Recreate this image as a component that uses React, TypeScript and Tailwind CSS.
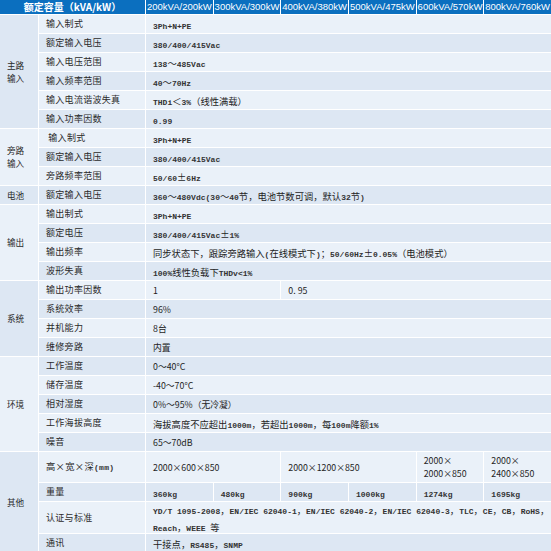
import type { ReactNode } from "react";

type Cell = { t: string; span: number; sans?: boolean };
type Row = { label: string; cells: Cell[]; sans?: boolean };
type Group = { name: string[]; rows: Row[] };

const HEAD = ["200kVA/200kW", "300kVA/300kW", "400kVA/380kW", "500kVA/475kW", "600kVA/570kW", "800kVA/760kW"];

const one = (t: string, sans = false): Cell[] => [{ t, span: 6, sans }];

const GROUPS: Group[] = [
  {
    name: ["主路", "输入"],
    rows: [
      { label: "输入制式", cells: one("3Ph+N+PE") },
      { label: "额定输入电压", cells: one("380/400/415Vac") },
      { label: "输入电压范围", cells: one("138～485Vac") },
      { label: "输入频率范围", cells: one("40～70Hz") },
      { label: "输入电流谐波失真", cells: one("THDi＜3%（线性满载）") },
      { label: "输入功率因数", cells: one("0.99") },
    ],
  },
  {
    name: ["旁路", "输入"],
    rows: [
      { label: "\u00a0输入制式", cells: one("3Ph+N+PE") },
      { label: "额定输入电压", cells: one("380/400/415Vac") },
      { label: "旁路频率范围", cells: one("50/60±6Hz") },
    ],
  },
  {
    name: ["电池"],
    rows: [{ label: "额定输入电压", cells: one("360～480Vdc(30～40节，电池节数可调，默认32节)") }],
  },
  {
    name: ["输出"],
    rows: [
      { label: "输出制式", cells: one("3Ph+N+PE") },
      { label: "额定电压", cells: one("380/400/415Vac±1%") },
      { label: "输出频率", cells: one("同步状态下，跟踪旁路输入(在线模式下)；50/60Hz±0.05%（电池模式）") },
      { label: "波形失真", cells: one("100%线性负载下THDv<1%") },
    ],
  },
  {
    name: ["系统"],
    rows: [
      { label: "输出功率因数", cells: [{ t: "1", span: 2, sans: true }, { t: "0. 95", span: 4, sans: true }] },
      { label: "系统效率", cells: one("96%", true) },
      { label: "并机能力", cells: one("8台", true) },
      { label: "维修旁路", cells: one("内置", true) },
    ],
  },
  {
    name: ["环境"],
    rows: [
      { label: "工作温度", cells: one("0～40°C", true) },
      { label: "储存温度", cells: one("-40～70°C", true) },
      { label: "相对湿度", cells: one("0%～95%（无冷凝）", true) },
      { label: "工作海拔高度", cells: one("海拔高度不应超出1000m，若超出1000m，每100m降额1%") },
      { label: "噪音", cells: one("65～70dB", true) },
    ],
  },
  {
    name: ["其他"],
    rows: [
      {
        label: "高×宽×深(mm)",
        cells: [
          { t: "2000×600×850", span: 2, sans: true },
          { t: "2000×1200×850", span: 2, sans: true },
          { t: "2000×\n2000×850", span: 1, sans: true },
          { t: "2000×\n2400×850", span: 1, sans: true },
        ],
      },
      {
        label: "重量",
        cells: ["360kg", "480kg", "900kg", "1000kg", "1274kg", "1695kg"].map((t) => ({ t, span: 1 })),
      },
      {
        label: "认证与标准",
        cells: one("YD/T 1095-2008，EN/IEC 62040-1，EN/IEC 62040-2，EN/IEC 62040-3，TLC，CE，CB，RoHS，\nReach，WEEE 等"),
      },
      { label: "通讯", cells: one("干接点，RS485，SNMP") },
    ],
  },
];

const SPAN: Record<number, string> = { 1: "col-span-1", 2: "col-span-2", 4: "col-span-4", 6: "col-span-6" };
const RSPAN: Record<number, string> = { 1: "row-span-1", 3: "row-span-3", 4: "row-span-4", 5: "row-span-5", 6: "row-span-6" };

// SimSun-like look: latin narrow mono, cjk wider
function Mixed({ text }: { text: string }) {
  const lines = text.split("\n");
  return (
    <span className="leading-[13px]">
      {lines.map((ln, li) => (
        <span key={li} className="block">
          {ln.split(/([\u00b1\u00d7\u3000-\u9fff\uff00-\uffef]+)/).map((p, i) =>
            i % 2 ? (
              <span key={i} className="text-[9.3px] font-['Noto_Sans_CJK_SC',sans-serif]">{p}</span>
            ) : (
              <span key={i} className="text-[8px] font-bold text-[#333] font-['Liberation_Mono','Noto_Sans_CJK_SC',monospace]">{p}</span>
            )
          )}
        </span>
      ))}
    </span>
  );
}

function Sans({ text }: { text: string }) {
  return (
    <span className="leading-[13px] text-[8.8px] font-['Noto_Sans_CJK_SC',sans-serif]">
      {text.split("\n").map((ln, i) => (
        <span key={i} className="block">{ln}</span>
      ))}
    </span>
  );
}

export default function App() {
  const L = "bg-[#eaf1f9]";
  const D = "bg-[#dde7f3]";
  const out: ReactNode[] = [];
  let idx = 0;

  GROUPS.forEach((g, gi) => {
    out.push(
      <div
        key={`g${gi}`}
        className={`${RSPAN[g.rows.length]} ${gi % 2 ? L : D} flex flex-col justify-center pl-[7px] text-[8.6px] leading-[13px] text-[#2a2a2a]`}
      >
        {g.name.map((n) => (
          <span key={n}>{n}</span>
        ))}
      </div>
    );
    g.rows.forEach((r, ri) => {
      const dark = idx < 18 ? idx % 2 === 1 : idx % 2 === 0;
      const bg = dark ? D : L;
      out.push(
        <div key={`l${gi}-${ri}`} className={`${bg} flex items-center pl-[7px] whitespace-nowrap text-[9px] tracking-[0.3px] text-[#2a2a2a]`}>
          {r.label.includes("×") ? <Mixed text={r.label} /> : r.label}
        </div>
      );
      r.cells.forEach((c, ci) => {
        out.push(
          <div key={`c${gi}-${ri}-${ci}`} className={`${SPAN[c.span]} ${bg} flex items-center pl-[7px] whitespace-nowrap overflow-hidden text-[#1e1e1e]`}>
            {c.sans ? <Sans text={c.t} /> : <Mixed text={c.t} />}
          </div>
        );
      });
      idx++;
    });
  });

  return (
    <div className="w-[551px] h-[551px] overflow-hidden bg-white font-['Noto_Sans_CJK_SC',sans-serif]">
      <div className="grid gap-px grid-cols-[38px_106px_repeat(6,1fr)] grid-rows-[14px_repeat(23,18px)_30px_18px_31px_18px]">
        <div className="col-span-2 bg-[#0b6fbf] text-white text-[10px] font-bold flex items-center justify-center leading-none">
          额定容量（kVA/kW）
        </div>
        {HEAD.map((h) => (
          <div
            key={h}
            className="bg-[#0b6fbf] text-white text-[9.5px] font-['Liberation_Sans',sans-serif] flex items-center justify-center whitespace-nowrap overflow-hidden leading-none"
          >
            {h}
          </div>
        ))}
        {out}
      </div>
    </div>
  );
}
